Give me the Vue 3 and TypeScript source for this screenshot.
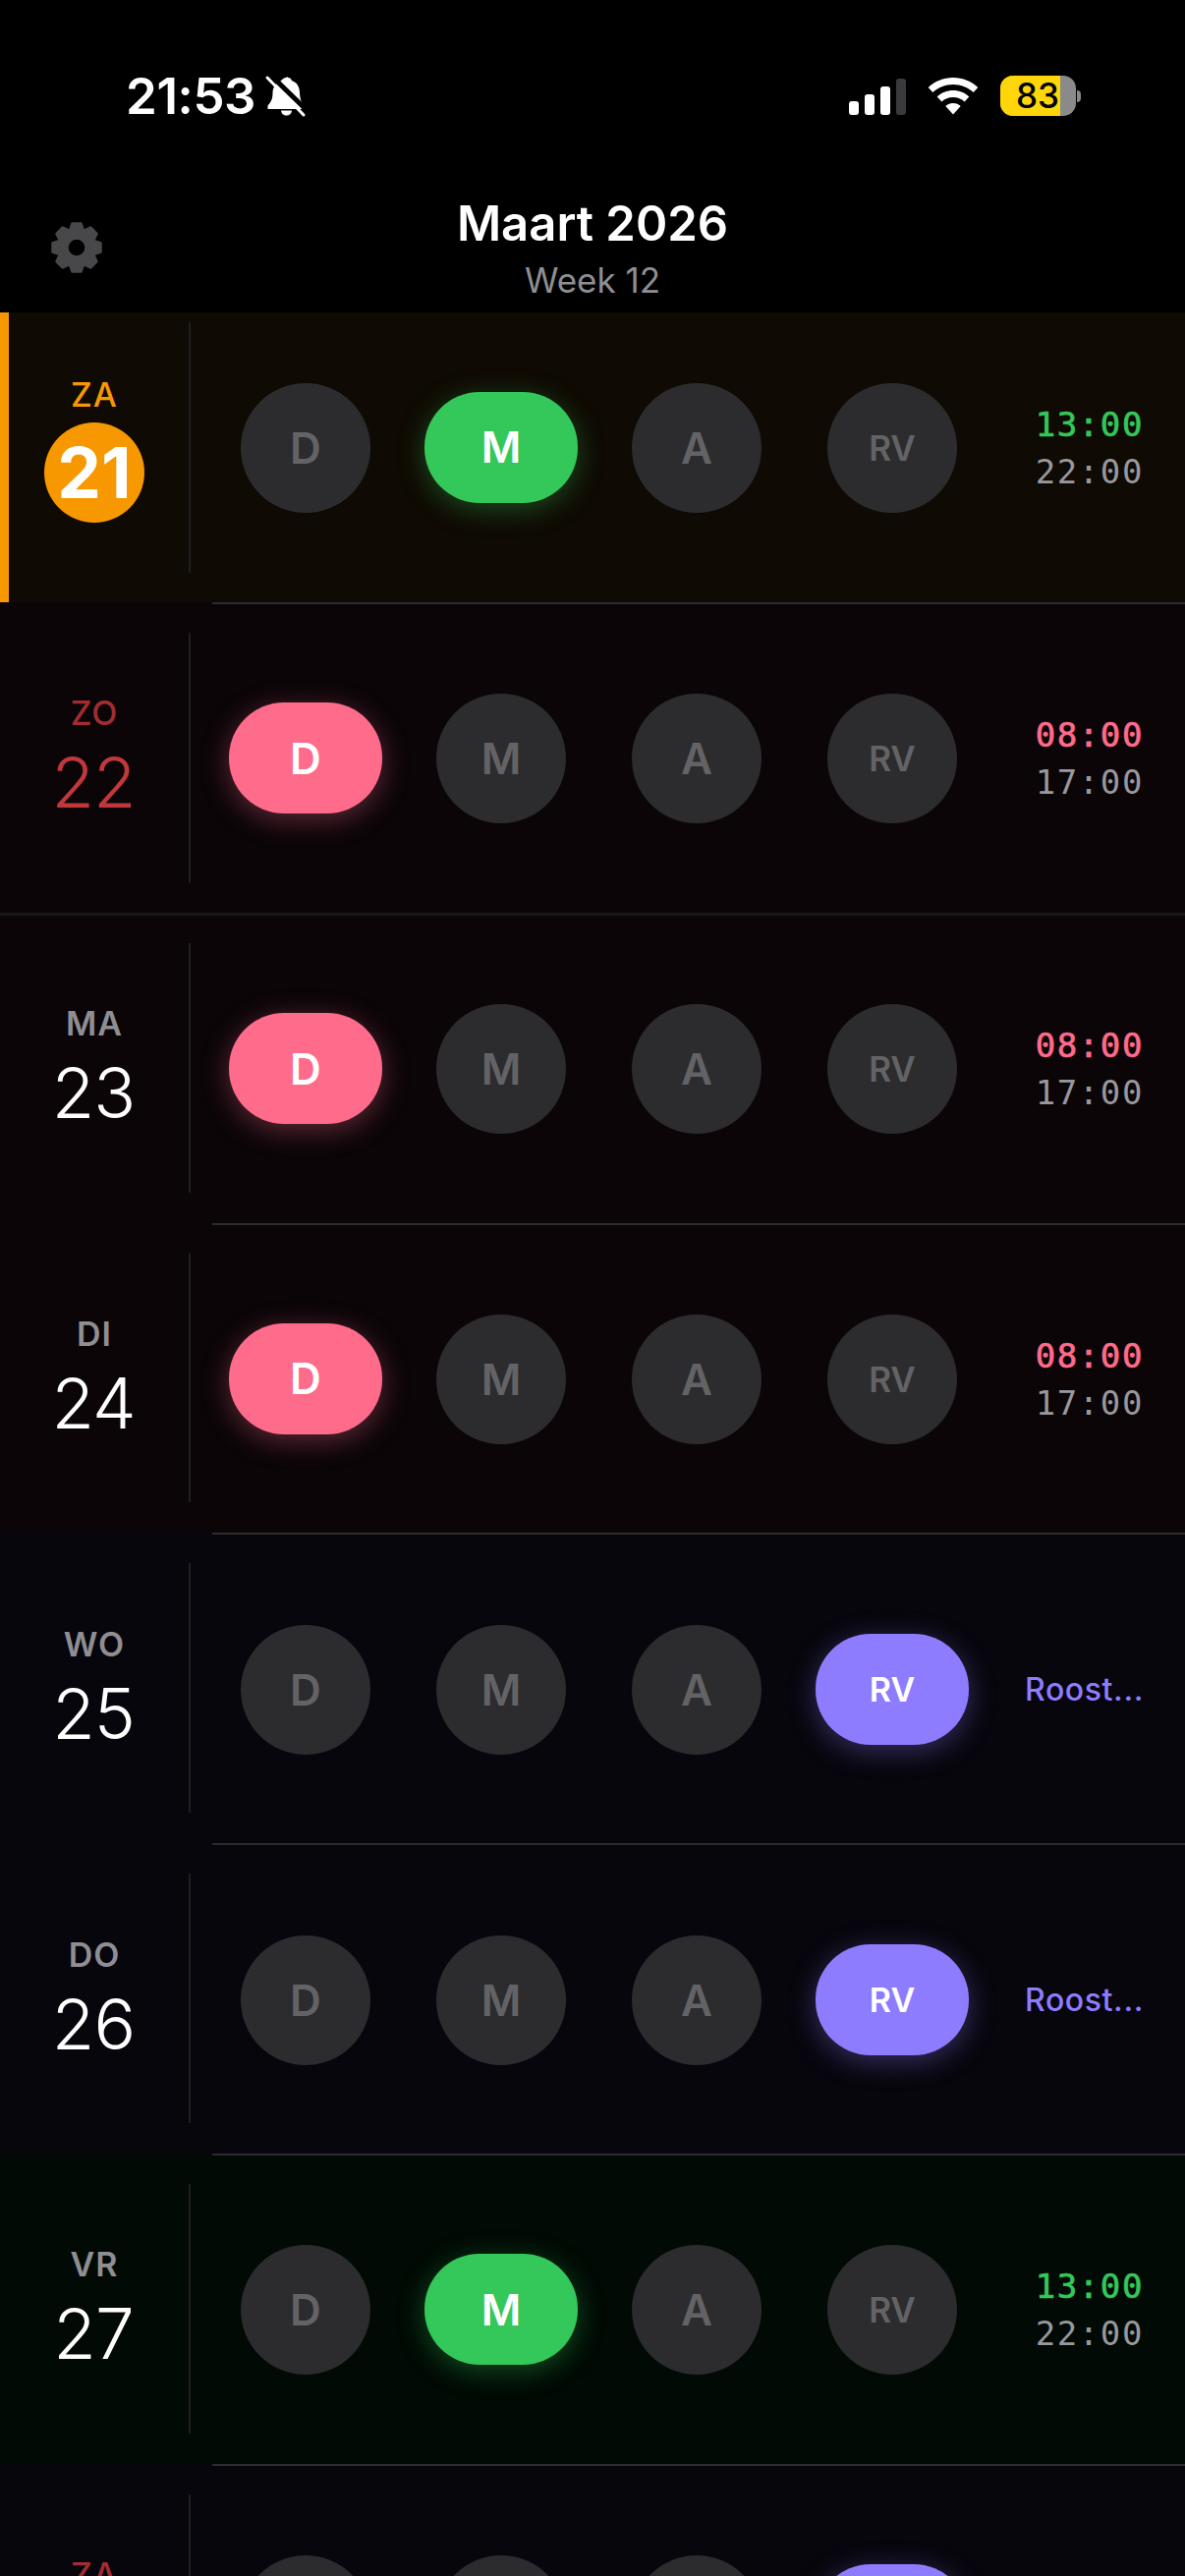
<template>
  <div class="phone">
    <div class="status-bar">
      <div class="status-left">
        <span class="clock">21:53</span>
        <svg class="bell" width="44" height="44" viewBox="0 0 44 44">
          <path d="M24 3c2 0 3.500 1.300 3.800 3 5 1.500 8 6 8.200 12 .2 6.500 1.500 10 4.500 13.500v3.500H3.500v-3.500c3.500-4 5-7 5-13 0-6 4-11 9-12.500.3-1.700 4.500-3.500 6.500-3.500z" fill="#fff"/>
          <path d="M17 36.500h11c-.3 3-2.600 5-5.500 5s-5.200-2-5.500-5z" fill="#fff"/>
          <path d="M6 0l39 38" stroke="#000" stroke-width="5"/>
          <path d="M3 3l37 38" stroke="#fff" stroke-width="3" stroke-linecap="round"/>
        </svg>
      </div>
      <div class="status-right">
        <div class="signal">
          <span class="bar b1"></span>
          <span class="bar b2"></span>
          <span class="bar b3"></span>
          <span class="bar b4"></span>
        </div>
        <svg class="wifi" width="52" height="38" viewBox="0 0 52 38">
          <path d="M26 0c9.800 0 18.700 3.800 25.300 10l-4.600 5C41.200 9.900 34 6.900 26 6.900S10.800 9.900 5.300 15L.7 10C7.300 3.800 16.200 0 26 0z" fill="#fff"/>
          <path d="M26 13c6.300 0 12 2.400 16.300 6.400l-4.700 5C34.500 21.600 30.500 20 26 20s-8.500 1.600-11.600 4.400l-4.700-5C14 15.400 19.700 13 26 13z" fill="#fff"/>
          <path d="M26 26c3 0 5.600 1.100 7.700 3L26 37.500 18.300 29c2.100-1.900 4.700-3 7.700-3z" fill="#fff"/>
        </svg>
        <div class="battery">
          <div class="battery-body">
            <span class="battery-fill">83</span>
          </div>
          <span class="battery-cap"></span>
        </div>
      </div>
    </div>

    <header class="header">
      <svg class="gear" width="54" height="54" viewBox="-27 -27 54 54">
        <circle r="13.500" fill="none" stroke="#48484a" stroke-width="10.500"/>
        <path
          v-for="angle in gearTeeth"
          :key="angle"
          :transform="'rotate(' + angle + ')'"
          d="M-4.500 -24.500h9l3 9h-15z"
          fill="#48484a"
          stroke="#48484a"
          stroke-width="2.500"
          stroke-linejoin="round"
        />
      </svg>
      <div class="month">Maart 2026</div>
      <div class="week">Week 12</div>
    </header>

    <div class="rows">
      <div
        v-for="(day, index) in days"
        :key="day.num"
        class="row"
        :class="[day.tone, { today: day.today, first: index === 0, seam: index === 2 }]"
      >
        <div class="date-col">
          <div class="date-inner">
            <span class="weekday" :class="{ sat: day.weekend }">{{ day.label }}</span>
            <span class="daynum" :class="{ sat: day.weekend }">{{ day.num }}</span>
          </div>
        </div>
        <div class="main" :class="{ 'no-line': index === 0 }">
          <div class="slots">
            <div v-for="slot in slots" :key="slot" class="slot-cell">
              <div class="slot" :class="[slot === day.active ? 'on on-' + slot : '', slot === 'RV' ? 'small' : '']">{{ slot }}</div>
            </div>
          </div>
          <div class="times">
            <template v-if="day.start">
              <span class="start" :class="day.active === 'D' ? 'pink' : 'green'">{{ day.start }}</span>
              <span class="end">{{ day.end }}</span>
            </template>
            <span v-else class="note">Roost...</span>
          </div>
        </div>
      </div>
    </div>
  </div>
</template>

<script setup lang="ts">
interface Day {
  label: string
  num: number
  active: string
  tone: string
  start?: string
  end?: string
  today?: boolean
  weekend?: boolean
}

const slots = ['D', 'M', 'A', 'RV']
const gearTeeth = [0, 45, 90, 135, 180, 225, 270, 315]

const days: Day[] = [
  { label: 'ZA', num: 21, active: 'M', tone: 'amber', start: '13:00', end: '22:00', today: true },
  { label: 'ZO', num: 22, active: 'D', tone: 'rose', start: '08:00', end: '17:00', weekend: true },
  { label: 'MA', num: 23, active: 'D', tone: 'rose', start: '08:00', end: '17:00' },
  { label: 'DI', num: 24, active: 'D', tone: 'rose', start: '08:00', end: '17:00' },
  { label: 'WO', num: 25, active: 'RV', tone: 'violet' },
  { label: 'DO', num: 26, active: 'RV', tone: 'violet' },
  { label: 'VR', num: 27, active: 'M', tone: 'green', start: '13:00', end: '22:00' },
  { label: 'ZA', num: 28, active: 'RV', tone: 'violet', weekend: true }
]
</script>

<style>
html,
body {
  margin: 0;
  background: #000;
}
</style>

<style scoped>
.phone {
  width: 1206px;
  height: 2622px;
  overflow: hidden;
  background: #000;
  font-family: Inter, "Liberation Sans", sans-serif;
  color: #fff;
}

.status-bar {
  height: 196px;
  box-sizing: border-box;
  padding: 70px 106px 0 128px;
  display: flex;
  justify-content: space-between;
  align-items: flex-start;
}

.status-left {
  display: flex;
  align-items: center;
  gap: 9px;
}

.clock {
  font-size: 51px;
  line-height: 56px;
  font-weight: 600;
  letter-spacing: -0.4px;
}

.bell {
  display: block;
}

.status-right {
  display: flex;
  align-items: center;
  gap: 22px;
  padding-top: 7px;
}

.signal {
  display: flex;
  align-items: flex-end;
  gap: 6px;
  height: 38px;
}

.bar {
  width: 10px;
  background: #fff;
  border-radius: 3px;
}

.b1 { height: 14px; }
.b2 { height: 21px; }
.b3 { height: 29px; }
.b4 { height: 37px; background: #3a3a3c; }

.battery {
  display: flex;
  align-items: center;
  gap: 1px;
}

.battery-body {
  width: 77px;
  height: 41px;
  border-radius: 13px;
  background: #8a8a8a;
  overflow: hidden;
}

.battery-fill {
  display: block;
  width: 61px;
  height: 41px;
  background: #ffd60a;
  color: #000;
  font-size: 35px;
  font-weight: 500;
  line-height: 41px;
  text-align: right;
  padding-right: 1px;
  box-sizing: border-box;
}

.battery-cap {
  width: 4px;
  height: 12px;
  background: #8a8a8a;
  border-radius: 0 6px 6px 0;
}

.header {
  position: relative;
  height: 122px;
  text-align: center;
}

.gear {
  position: absolute;
  left: 51px;
  top: 29px;
}

.month {
  font-size: 49px;
  line-height: 54px;
  font-weight: 600;
  padding-top: 5px;
}

.week {
  font-size: 35px;
  line-height: 42px;
  color: #8e8e93;
  margin-top: 9px;
}

.row {
  position: relative;
  display: flex;
  height: 315.8px;
  box-sizing: border-box;
}

.row.first {
  height: 295px;
}

.row.seam {
  box-shadow: inset 0 3px 0 #18181a;
}

.amber { background: #0f0a03; }
.rose { background: #0b0508; }
.violet { background: #07060d; }
.green { background: #010a04; }

.today::before {
  content: "";
  position: absolute;
  left: 0;
  top: 0;
  bottom: 0;
  width: 9px;
  background: #f79800;
}

.date-col {
  width: 216px;
  flex: none;
  display: flex;
  flex-direction: column;
}

.date-inner {
  box-sizing: border-box;
  width: 194px;
  margin: 31px 0 31px;
  padding-top: 12px;
  flex: 1;
  border-right: 2px solid #1f1f21;
  display: flex;
  flex-direction: column;
  align-items: center;
  justify-content: center;
}

.first .date-inner {
  margin: 10px 0 30px;
  padding-top: 3px;
}

.weekday {
  font-size: 34px;
  line-height: 39px;
  font-weight: 600;
  letter-spacing: 1px;
  color: #8e8e93;
}

.weekday.sat {
  font-weight: 500;
  color: #a32c32;
}

.daynum {
  font-size: 71px;
  line-height: 102px;
  font-weight: 300;
  letter-spacing: -1px;
  margin-right: 2px;
  color: #fff;
}

.daynum.sat {
  color: #c0383c;
}

.today .weekday {
  font-weight: 500;
  line-height: 40px;
  color: #f79800;
}

.today .daynum {
  width: 102px;
  height: 102px;
  border-radius: 50%;
  background: #f79800;
  text-align: center;
  font-weight: 700;
  letter-spacing: 0;
  margin-top: 8px;
  margin-right: 0;
}

.main {
  flex: 1;
  display: flex;
  align-items: center;
  border-top: 2px solid #2c2c2e;
  padding-top: 1px;
  position: relative;
}

.main.no-line {
  border-top: none;
  padding-top: 0;
  padding-bottom: 20px;
}

.seam .main {
  border-top-color: transparent;
}

.slots {
  display: flex;
  flex: none;
  margin-left: -5px;
}

.slot-cell {
  width: 199px;
  display: flex;
  justify-content: center;
}

.slot {
  width: 132px;
  height: 132px;
  border-radius: 66px;
  background: #2c2c2e;
  color: #636366;
  font-size: 44px;
  font-weight: 600;
  padding-left: 1px;
  box-sizing: border-box;
  display: flex;
  align-items: center;
  justify-content: center;
}

.slot.small {
  font-size: 35px;
  font-weight: 600;
}

.slot.on {
  width: 156px;
  height: 113px;
  border-radius: 56px;
  color: #fff;
  font-size: 44px;
  font-weight: 600;
  margin: 9px 0;
}

.slot.on.small {
  font-size: 34px;
  font-weight: 600;
}

.on-M {
  background: #34c759;
  box-shadow: 0 6px 28px rgba(52, 199, 89, 0.35);
}

.on-D {
  background: #ff6b8a;
  box-shadow: 0 6px 28px rgba(255, 107, 138, 0.35);
}

.on-RV {
  background: #8e7cff;
  box-shadow: 0 6px 28px rgba(142, 124, 255, 0.35);
}

.times {
  flex: 1;
  display: flex;
  flex-direction: column;
  align-items: flex-end;
  padding-right: 42px;
  font-family: "DejaVu Sans Mono", "Liberation Mono", monospace;
  font-size: 34px;
  line-height: 48px;
  letter-spacing: 1.6px;
}

.start {
  -webkit-text-stroke: 0.7px currentColor;
}

.start.green {
  background: none;
  color: #34c759;
}

.start.pink {
  color: #ff6b8a;
}

.end {
  color: #98989d;
}

.note {
  font-family: Inter, "Liberation Sans", sans-serif;
  font-size: 32px;
  font-weight: 450;
  letter-spacing: 0.6px;
  color: #8e7cff;
}
</style>
